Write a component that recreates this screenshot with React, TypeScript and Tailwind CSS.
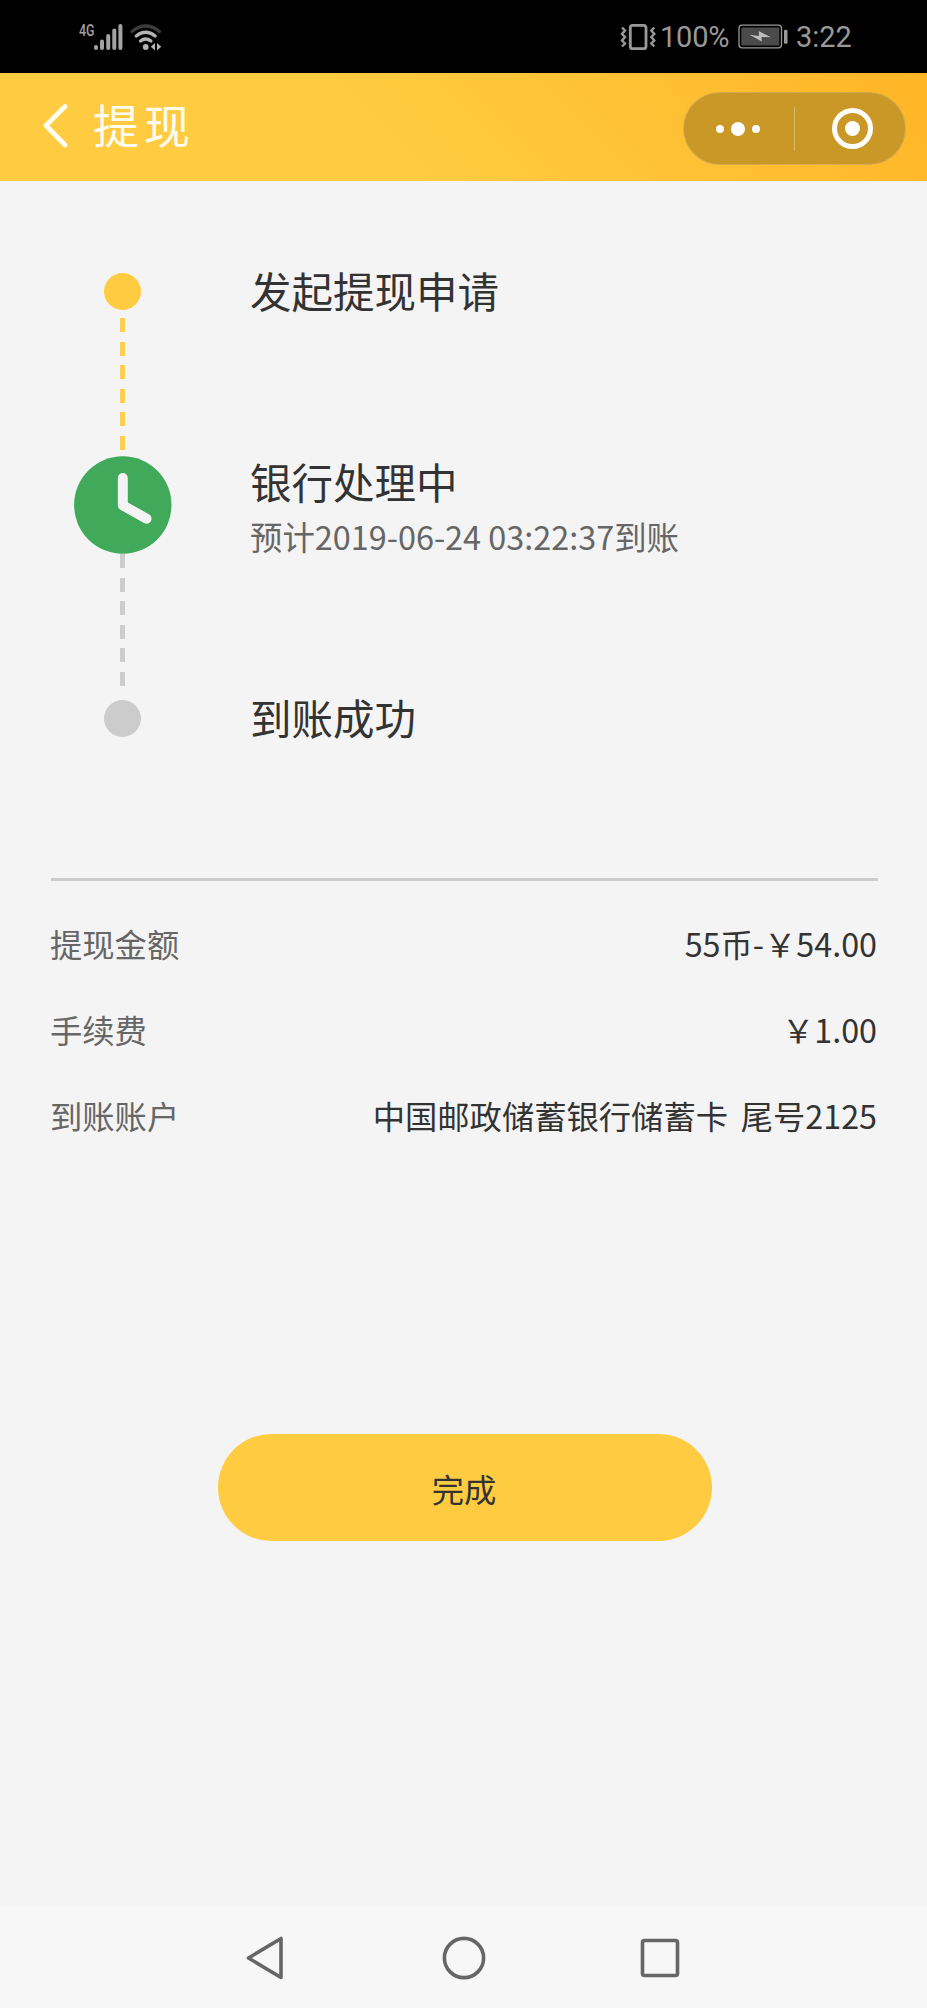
import React from "react";

interface DetailRow {
  label: string;
  value: string;
}

const DETAILS: DetailRow[] = [
  { label: "提现金额", value: "55币-￥54.00" },
  { label: "手续费", value: "￥1.00" },
  { label: "到账账户", value: "中国邮政储蓄银行储蓄卡 尾号2125" },
];

const StatusBar: React.FC = () => (
  <div className="h-[73px] bg-black flex items-center justify-between pl-[78px] pr-[75px] text-[#999999]">
    <svg width="86" height="36" viewBox="78 18 86 36" fill="none">
      <text
        x="79"
        y="34.5"
        fill="#a0a0a0"
        fontFamily="Roboto, sans-serif"
        fontSize="16"
        fontWeight="500"
        textLength="15.5"
        lengthAdjust="spacingAndGlyphs"
      >
        4G
      </text>
      <g stroke="#a3a3a3" strokeWidth="4" strokeLinecap="round">
        <path d="M96 46v1" />
        <path d="M102 40.5v6.5" />
        <path d="M108.2 35v12" />
        <path d="M114.3 29.5v17.5" />
        <path d="M120.4 25v22" />
      </g>
      <g strokeWidth="3.2" strokeLinecap="round">
        <path d="M132 30.5Q145.7 19.5 159.5 30.5" stroke="#3c3c3c" />
        <path d="M136.2 35Q145.7 27.5 155.2 35" stroke="#b4b4b4" />
        <path d="M140.5 40Q145.7 36 151 40" stroke="#b4b4b4" />
      </g>
      <circle cx="145.7" cy="46" r="2.9" fill="#b4b4b4" />
      <path d="M155 42v7.5l-4.2-3.8z" fill="#b4b4b4" />
      <path d="M157 42v7.5l4.2-3.8z" fill="#b4b4b4" />
    </svg>

    <div className="flex items-center font-[Roboto,sans-serif] text-[29px] leading-none">
      <svg width="36" height="30" viewBox="620 21 36 30" fill="none" stroke="#999999">
        <rect x="630.3" y="24.3" width="15.7" height="23.4" rx="2.5" strokeWidth="2.8" />
        <path d="M622 26.5l3 3-3 3.5 3 3-3 3.5 3 3-3 3" strokeWidth="2.4" />
        <path d="M654.3 26.5l-3 3 3 3.5-3 3 3 3.5-3 3 3 3" strokeWidth="2.4" />
      </svg>
      <span className="ml-[4px] w-[71px] mt-[2px] tracking-[-0.2px]">100%</span>
      <svg className="ml-[7px]" width="50" height="26" viewBox="738 24 50 26">
        <rect x="739" y="25.2" width="42.5" height="22.6" rx="3" fill="none" stroke="#999999" strokeWidth="1.3" />
        <rect x="741.3" y="27.5" width="38" height="18" rx="1" fill="#4a4a4a" />
        <path d="M749.5 34.8l9.5 1.1-.3-4.9 12.3 6.3-9.5-.4.3 4.7z" fill="#bcbcbc" />
        <rect x="784" y="29.7" width="3.5" height="14" rx="1.2" fill="#999999" />
      </svg>
      <span className="ml-[8px] w-[56px] mt-[2px] whitespace-nowrap">3:22</span>
    </div>
  </div>
);

const Header: React.FC = () => (
  <header className="h-[108px] flex items-center justify-between pl-[42px] pr-[21px] bg-[linear-gradient(45deg,#ffcb41_42%,#ffb526_100%)]">
    <div className="flex items-center">
      <svg className="mt-[-4px]" width="28" height="46" viewBox="0 0 28 46" fill="none">
        <path
          d="M23 4.5L4 23.5l19 19.5"
          stroke="#fffdf0"
          strokeWidth="4.8"
          strokeLinecap="round"
          strokeLinejoin="round"
        />
      </svg>
      <h1 className="ml-[23px] mt-[-9px] text-[46px] leading-[60px] tracking-[5px] text-[#fffdf0]">提现</h1>
    </div>
    <div className="w-[223px] h-[73px] mt-[3px] rounded-full border border-white/20 bg-[#c99826] flex items-center">
      <div className="w-[110px] pr-[2px] flex items-center justify-center gap-[7px]">
        <span className="size-[8px] rounded-full bg-white" />
        <span className="size-[14px] rounded-full bg-white" />
        <span className="size-[8px] rounded-full bg-white" />
      </div>
      <div className="w-px h-[44px] bg-white/30" />
      <div className="flex-1 flex justify-center">
        <div className="size-[41px] ml-[4px] rounded-full border-[5px] border-white flex items-center justify-center">
          <span className="size-[15px] rounded-full bg-white" />
        </div>
      </div>
    </div>
  </header>
);

const Dashes: React.FC<{ color: string }> = ({ color }) => (
  <div className="flex flex-col justify-between items-center h-[132px]">
    {[0, 1, 2, 3, 4, 5].map((i) => (
      <span key={i} className={`w-[5px] h-[14px] ${color}`} />
    ))}
  </div>
);

const Timeline: React.FC = () => (
  <section className="flex pl-[74px] pt-[92px] h-[697px]">
    <div className="w-[97px] flex flex-col items-center">
      <span className="size-[37px] rounded-full bg-[#ffcb41]" />
      <div className="mt-[8px]">
        <Dashes color="bg-[#fbce52]" />
      </div>
      <svg className="mt-[6px] shrink-0 overflow-visible" width="97" height="98" viewBox="0 0 97 98" fill="none">
        <circle cx="48.8" cy="49" r="48.7" fill="#40a95a" />
        <path
          d="M48.8 22v27.3L72.5 62.7"
          stroke="#f4f4f4"
          strokeWidth="10"
          strokeLinecap="round"
          strokeLinejoin="round"
        />
      </svg>
      <Dashes color="bg-[#cccccc]" />
      <span className="mt-[14px] size-[37px] rounded-full bg-[#cccccc]" />
    </div>

    <div className="ml-[79px] text-[41.5px] leading-[60px] text-[#333333]">
      <p className="mt-[-13px]">发起提现申请</p>
      <div className="mt-[131px]">
        <p>银行处理中</p>
        <p className="mt-px text-[32.4px] leading-[48px] text-[#666666]">预计2019-06-24 03:22:37到账</p>
      </div>
      <p className="mt-[127px]">到账成功</p>
    </div>
  </section>
);

const App: React.FC = () => {
  return (
    <div className="w-[927px] h-[2008px] flex flex-col overflow-hidden bg-[#f4f4f4] font-['Noto_Sans_CJK_SC',sans-serif]">
      <StatusBar />
      <Header />

      <main className="flex-1">
        <Timeline />

        <section className="ml-[51px] mr-[49px] border-t-[3px] border-[#cccccc] pt-[19px]">
          {DETAILS.map((row) => (
            <div key={row.label} className="h-[86px] flex items-center justify-between text-[32.3px]">
              <span className="ml-[-1px] text-[#666666]">{row.label}</span>
              <span className="mr-px text-[#333333] whitespace-pre [word-spacing:5.5px]">{row.value}</span>
            </div>
          ))}
        </section>

        <button
          type="button"
          className="block ml-[218px] mt-[276px] w-[494px] h-[107px] pt-[2px] pr-[2px] rounded-full bg-[#ffcb41] text-[32.3px] text-[#333333]"
        >
          完成
        </button>
      </main>

      <nav className="h-[101px] bg-[#f7f7f7] flex items-center justify-between pl-[246px] pr-[247px]">
        <svg width="38" height="44" viewBox="0 0 38 44" fill="none" stroke="#666666" strokeWidth="3.6" strokeLinejoin="round">
          <path d="M35 2.5v39L2.5 22z" />
        </svg>
        <svg className="ml-[3px]" width="44" height="44" viewBox="0 0 44 44" fill="none" stroke="#666666" strokeWidth="3.6">
          <circle cx="22" cy="22" r="19.6" />
        </svg>
        <svg width="40" height="40" viewBox="0 0 40 40" fill="none" stroke="#666666" strokeWidth="3.6">
          <rect x="2.5" y="2.5" width="35" height="35" rx="2" />
        </svg>
      </nav>
    </div>
  );
};

export default App;
